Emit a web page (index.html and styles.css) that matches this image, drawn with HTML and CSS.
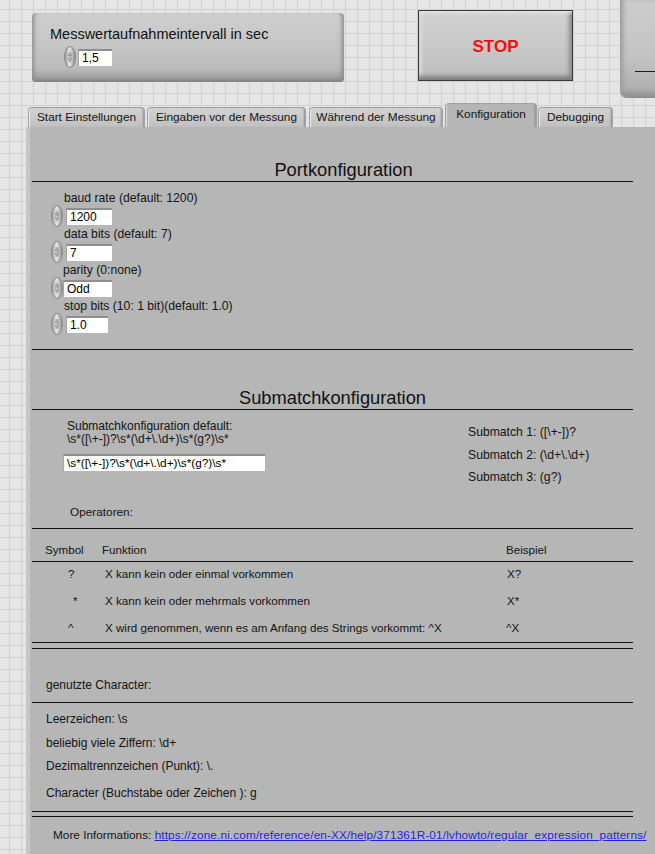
FILE: index.html
```html
<!DOCTYPE html>
<html lang="de">
<head>
<meta charset="utf-8">
<title>Konfiguration</title>
<link rel="stylesheet" href="styles.css">
</head>
<body>
<div class="top">
  <div class="ctrl-box">
    <div class="ctrl-label">Messwertaufnahmeintervall in sec</div>
    <div class="num">
      <svg class="spin" viewBox="0 0 12 22"><path d="M4 9.5 L6 5.5 L8 9.5 Z M6 9.5 V11" /><path d="M4 12.5 L6 16.5 L8 12.5 Z" /></svg>
      <span class="input top-input">1,5</span>
    </div>
  </div>
  <div class="stop">STOP</div>
  <div class="edge"><div class="edge-line"></div></div>
</div>

<div class="tabs">
  <div class="tab t1">Start Einstellungen</div>
  <div class="tab t2">Eingaben vor der Messung</div>
  <div class="tab t3">Während der Messung</div>
  <div class="tab t4 active">Konfiguration</div>
  <div class="tab t5">Debugging</div>
</div>

<div class="panel">
  <div class="content">
    <h2 class="title port-title">Portkonfiguration</h2>
    <div class="fields">
      <div class="flabel">baud rate (default: 1200)</div>
      <div class="frow">
        <svg class="spin" viewBox="0 0 12 22"><path d="M4 9.5 L6 5.5 L8 9.5 Z M6 9.5 V11" /><path d="M4 12.5 L6 16.5 L8 12.5 Z" /></svg>
        <span class="input w46">1200</span>
      </div>
      <div class="flabel">data bits (default: 7)</div>
      <div class="frow">
        <svg class="spin" viewBox="0 0 12 22"><path d="M4 9.5 L6 5.5 L8 9.5 Z M6 9.5 V11" /><path d="M4 12.5 L6 16.5 L8 12.5 Z" /></svg>
        <span class="input w46">7</span>
      </div>
      <div class="flabel flabel-left">parity (0:none)</div>
      <div class="frow">
        <svg class="spin" viewBox="0 0 12 22"><path d="M4 9.5 L6 5.5 L8 9.5 Z M6 9.5 V11" /><path d="M4 12.5 L6 16.5 L8 12.5 Z" /></svg>
        <span class="input w49 shift-left">Odd</span>
      </div>
      <div class="flabel">stop bits (10: 1 bit)(default: 1.0)</div>
      <div class="frow">
        <svg class="spin" viewBox="0 0 12 22"><path d="M4 9.5 L6 5.5 L8 9.5 Z M6 9.5 V11" /><path d="M4 12.5 L6 16.5 L8 12.5 Z" /></svg>
        <span class="input w42">1.0</span>
      </div>
    </div>

    <h2 class="title sub-title">Submatchkonfiguration</h2>
    <div class="sub-body">
      <div class="sub-left">
        <div class="txt pad4">Submatchkonfiguration default:</div>
        <div class="txt pad4">\s*([\+-])?\s*(\d+\.\d+)\s*(g?)\s*</div>
        <div class="input regex">\s*([\+-])?\s*(\d+\.\d+)\s*(g?)\s*</div>
        <div class="txt oper">Operatoren:</div>
      </div>
      <div class="sub-right">
        <div class="txt">Submatch 1: ([\+-])?</div>
        <div class="txt sm2">Submatch 2: (\d+\.\d+)</div>
        <div class="txt sm3">Submatch 3: (g?)</div>
      </div>
    </div>

    <div class="table">
      <div class="thead">
        <span class="h1">Symbol</span>
        <span class="h2">Funktion</span>
        <span class="h3">Beispiel</span>
      </div>
      <div class="tbody">
        <div class="trow"><span class="c1">?</span><span class="c2">X kann kein oder einmal vorkommen</span><span class="c3">X?</span></div>
        <div class="trow"><span class="c1 star">*</span><span class="c2">X kann kein oder mehrmals vorkommen</span><span class="c3">X*</span></div>
        <div class="trow"><span class="c1">^</span><span class="c2">X wird genommen, wenn es am Anfang des Strings vorkommt: ^X</span><span class="c3 c3b">^X</span></div>
      </div>
      <div class="double"></div>
    </div>

    <div class="chars-head">genutzte Character:</div>
    <div class="chars">
      <div class="txt ch1">Leerzeichen: \s</div>
      <div class="txt ch2">beliebig viele Ziffern: \d+</div>
      <div class="txt ch3">Dezimaltrennzeichen (Punkt): \.</div>
      <div class="txt ch4">Character (Buchstabe oder Zeichen ): g</div>
    </div>
    <div class="double double2"></div>
    <div class="more">More Informations: <a href="#">https://zone.ni.com/reference/en-XX/help/371361R-01/lvhowto/regular_expression_patterns/</a></div>
  </div>
</div>
</body>
</html>
```

FILE: styles.css
```css
html, body {
  margin: 0;
  padding: 0;
}

body {
  width: 655px;
  height: 854px;
  overflow: hidden;
  font-family: "Liberation Sans", Arial, sans-serif;
  color: #141414;
  background-color: #e5e5e5;
  background-image:
    linear-gradient(#d1d1d1 1px, transparent 1px),
    linear-gradient(90deg, #d1d1d1 1px, transparent 1px);
  background-size: 12px 12px;
  background-position: 9px 9px;
}

/* ---------- top row ---------- */
.top {
  display: flex;
  align-items: flex-start;
  height: 104px;
}

.top > * {
  flex: none;
}

.ctrl-box {
  margin: 13px 0 0 32px;
  width: 312px;
  height: 69px;
  box-sizing: border-box;
  padding: 13px 0 0 16px;
  border-radius: 4px;
  background: linear-gradient(to bottom, #cfcfcf 0%, #c6c6c6 45%, #bcbcbc 80%, #a4a4a4 92%, #7f7f7f 100%);
  box-shadow:
    inset 4px 0 4px -2px #8e8e8e,
    inset -4px 0 4px -2px #8a8a8a,
    inset 0 2px 2px -1px #e2e2e2;
}

.ctrl-label {
  margin-left: 2px;
  font-size: 14.5px;
  line-height: 17px;
  color: #111;
}

.num {
  display: flex;
  align-items: center;
  margin-top: 3px;
  height: 22px;
}

.top-input {
  margin-left: 2px;
  width: 34px;
  height: 18px;
  line-height: 16px;
}

.stop {
  margin: 10px 0 0 74px;
  width: 155px;
  height: 71px;
  box-sizing: border-box;
  padding-top: 2px;
  border: 1px solid #3a3a3a;
  display: flex;
  align-items: center;
  justify-content: center;
  font-size: 17px;
  font-weight: bold;
  color: #ff0a0a;
  background: linear-gradient(to bottom, #d2d2d2 0%, #c8c8c8 50%, #bdbdbd 100%);
  box-shadow:
    inset 0 4px 3px -2px #e4e4e4,
    inset 0 -6px 4px -2px #7e7e7e,
    inset 5px 0 3px -2px #dedede,
    inset -5px 0 4px -2px #8a8a8a;
}

.edge {
  margin-left: 47px;
  width: 40px;
  height: 98px;
  border-radius: 0 0 0 7px;
  background: linear-gradient(to bottom, #cdcdcd 0%, #c3c3c3 60%, #b0b0b0 90%, #8a8a8a 100%);
  box-shadow: inset 5px 0 5px -2px #9a9a9a;
  overflow: hidden;
}

.edge-line {
  margin: 71px 0 0 15px;
  height: 1px;
  background: #1a1a1a;
}

/* ---------- tabs ---------- */
.tabs {
  display: flex;
  align-items: flex-end;
  height: 23px;
  padding-left: 28px;
}

.tab {
  flex: none;
  height: 20px;
  box-sizing: border-box;
  font-size: 11.8px;
  line-height: 18px;
  text-align: center;
  white-space: nowrap;
  color: #151515;
  background: linear-gradient(to bottom, #d3d3d3, #c0c0c0);
  border: 1px solid #a2a2a2;
  border-bottom: none;
  border-radius: 4px 4px 0 0;
  box-shadow: inset 2px 0 1px -1px #ececec, inset -2px 0 2px -1px #8f8f8f;
}

.t1 { width: 117px; margin-right: 2px; }
.t2 { width: 159px; margin-right: 3px; }
.t3 { width: 134px; margin-right: 2px; }
.t4 { width: 92px; margin-right: 1px; }
.t5 { width: 75px; }

.tab.active {
  height: 24px;
  line-height: 20px;
  background: #b6b6b6;
  box-shadow: inset 2px 0 1px -1px #d6d6d6, inset -2px 0 2px -1px #8f8f8f;
}

/* ---------- panel ---------- */
.panel {
  margin-left: 26px;
  height: 727px;
  box-sizing: border-box;
  background: #b6b6b6;
  border-left: 4px solid #c6c6c6;
}

.content {
  margin-left: 2px;
  width: 601px;
  font-size: 12px;
}

.title {
  margin: 0;
  font-weight: normal;
  font-size: 18.3px;
  line-height: 22px;
  text-align: center;
  color: #111;
  border-bottom: 1px solid #111;
}

.port-title {
  padding-top: 32px;
  padding-left: 22px;
}

.sub-title {
  padding-top: 37px;
}

/* fields */
.fields {
  padding: 9px 0 14px 0;
  border-bottom: 1px solid #111;
}

.flabel {
  margin-left: 32px;
  line-height: 14px;
  height: 14px;
  font-size: 12.2px;
  white-space: nowrap;
}

.flabel-left {
  margin-left: 31px;
}

.frow {
  display: flex;
  align-items: center;
  height: 22px;
}

.spin {
  width: 12px;
  height: 22px;
  flex: none;
  box-sizing: border-box;
  border: 1px solid #8a8a8a;
  border-radius: 6px / 11px;
  background: linear-gradient(to right, #9c9c9c 0%, #e3e3e3 45%, #c4c4c4 70%, #8e8e8e 100%);
  fill: none;
  stroke: #6e6e6e;
  stroke-width: 0.8;
}

.num .spin {
  margin-left: 16px;
}

.frow .spin {
  margin-left: 19px;
}

.input {
  display: block;
  box-sizing: border-box;
  height: 17px;
  padding-left: 3px;
  background: #fff;
  border-top: 2px solid #8e8e8e;
  border-left: 1px solid #a4a4a4;
  font-size: 12px;
  line-height: 15px;
  color: #000;
  white-space: nowrap;
}

.frow .input {
  margin-left: 3px;
}

.w46 { width: 46px; }
.w42 { width: 42px; }
.w49 { width: 49px; }
.frow .shift-left { margin-left: 0; }

/* submatch */
.sub-body {
  display: flex;
  padding-top: 10px;
}

.sub-left {
  flex: none;
  width: 436px;
  padding-left: 31px;
  box-sizing: border-box;
}

.txt {
  line-height: 13px;
  white-space: nowrap;
}

.pad4 {
  padding-left: 4px;
}

.regex {
  margin-top: 8px;
  width: 202px;
  font-size: 11.8px;
  padding-left: 3px;
}

.oper {
  margin-top: 35px;
  padding-left: 7px;
  font-size: 11.8px;
}

.sub-right {
  padding-top: 6px;
  font-size: 12.2px;
}

.sm2 { margin-top: 10px; }
.sm3 { margin-top: 9px; }

/* table */
.table {
  margin-top: 9px;
  border-top: 1px solid #111;
  font-size: 11.6px;
}

.thead {
  display: flex;
  padding: 14px 0 5px 0;
  line-height: 13px;
  border-bottom: 1px solid #111;
}

.h1 { width: 70px; padding-left: 13px; box-sizing: border-box; }
.h2 { width: 404px; }

.tbody {
  padding-top: 5px;
}

.trow {
  display: flex;
  line-height: 13px;
  white-space: nowrap;
}

.trow + .trow {
  margin-top: 14px;
}

.c1 { width: 73px; padding-left: 36px; box-sizing: border-box; }
.c1.star { padding-left: 41px; }
.c2 { width: 402px; }
.c3b { margin-left: -1px; }

.double {
  margin-top: 8px;
  height: 5px;
  border-top: 1px solid #111;
  border-bottom: 1px solid #111;
}

/* characters */
.chars-head {
  margin-top: 30px;
  padding: 0 0 10px 14px;
  line-height: 13px;
  border-bottom: 1px solid #111;
}

.chars {
  padding: 10px 0 0 14px;
}

.ch2 { margin-top: 11px; }
.ch3 { margin-top: 10px; }
.ch4 { margin-top: 14px; }

.double2 {
  margin-top: 11px;
  height: 4px;
}

.more {
  margin-top: 12px;
  padding-left: 21px;
  line-height: 13px;
  white-space: nowrap;
  font-size: 11.8px;
}

.more a {
  color: #1f1fe6;
  text-decoration: underline;
  letter-spacing: 0.12px;
}
```
